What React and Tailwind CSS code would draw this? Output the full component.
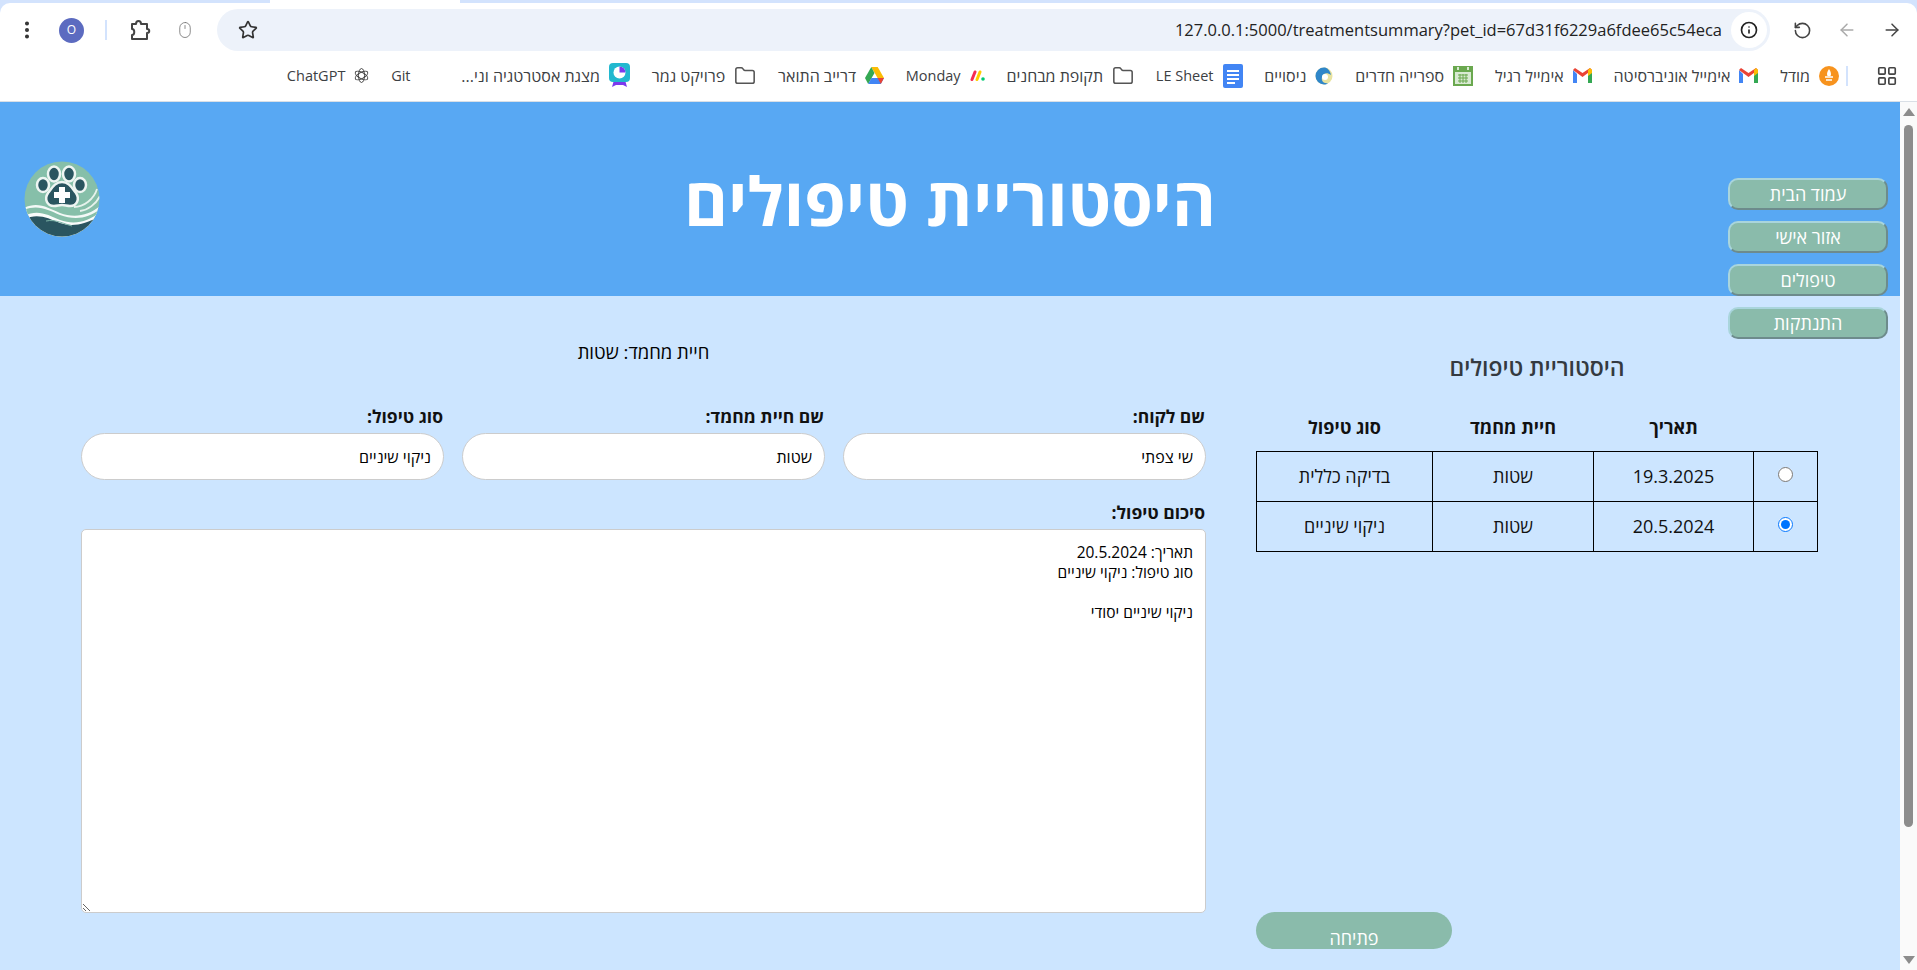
import React from 'react';
import { MoreVertical, Star, Info, RotateCcw, ArrowLeft, ArrowRight, Folder, LayoutGrid, Mouse } from 'lucide-react';

const font = 'font-["Open_Sans","Liberation_Sans",sans-serif]';

// favicons for the bookmarks bar
const MoodleIcon = () => (
  <svg width="20" height="20" viewBox="0 0 20 20">
    <circle cx="10" cy="10" r="10" fill="#f7931e" />
    <path d="M10 3c2 3 2.500 5 1.500 7h-3C7.500 8 8 6 10 3z" fill="#fff" />
    <path d="M6 11h8M7 14h6" stroke="#fff" strokeWidth="1.500" />
  </svg>
);
const GmailIcon = () => (
  <svg width="19" height="15" viewBox="0 0 19 15">
    <path d="M0 2v13h4V6z" fill="#4285f4" />
    <path d="M15 6v9h4V2z" fill="#34a853" />
    <path d="M0 2l9.500 7L19 2l-2-2-7.500 5L2 0z" fill="#ea4335" />
    <path d="M15 2l2-2 2 2v3l-4 3z" fill="#fbbc04" />
  </svg>
);
const CalendarIcon = () => (
  <svg width="20" height="20" viewBox="0 0 20 20">
    <rect width="20" height="20" fill="#6aa84f" />
    <rect x="2" y="6" width="16" height="12" fill="#d9ead3" />
    <path d="M5 9h10M5 12h10M5 15h10M7 8v9M10 8v9M13 8v9" stroke="#6aa84f" />
    <path d="M5 1v3M15 1v3" stroke="#fff" strokeWidth="1.500" />
  </svg>
);
const EdgeIcon = () => (
  <svg width="18" height="20" viewBox="0 0 18 20">
    <circle cx="9" cy="10" r="8.500" fill="#e8e3a0" />
    <path d="M9 1.500a8.500 8.500 0 0 0 0 17c2 0 3-.5 4-1.500-4 1-7-2-6-6s5-5 9-2C15 4 12 1.500 9 1.500z" fill="#2f86c9" />
    <circle cx="10" cy="11" r="3" fill="#fff" />
  </svg>
);
const DocIcon = () => (
  <svg width="20" height="24" viewBox="0 0 20 24">
    <rect width="20" height="24" rx="2" fill="#4285f4" />
    <path d="M4 7h12M4 11h12M4 15h12M4 19h8" stroke="#fff" strokeWidth="2" />
  </svg>
);
const MondayIcon = () => (
  <svg width="15" height="11" viewBox="0 0 15 11">
    <path d="M2 9.500L5 2" stroke="#f62b54" strokeWidth="3" strokeLinecap="round" />
    <path d="M7 9.500L10 2" stroke="#ffcc00" strokeWidth="3" strokeLinecap="round" />
    <circle cx="13" cy="9" r="1.800" fill="#00ca72" />
  </svg>
);
const DriveIcon = () => (
  <svg width="19" height="19" viewBox="0 0 19 17">
    <path d="M6.300 0h6.400l6.300 11h-6.400z" fill="#fbbc04" />
    <path d="M6.300 0L0 11l3.200 6 6.300-11z" fill="#34a853" />
    <path d="M3.200 17h12.600l3.200-6H6.400z" fill="#4285f4" />
    <path d="M15.800 17L19 11h-6.400z" fill="#ea4335" />
  </svg>
);
const SlidesIcon = () => (
  <svg width="21" height="25" viewBox="0 0 21 25">
    <path d="M5 17l-2 7 4-2h7l4 2-2-7z" fill="#7c3aed" />
    <rect width="21" height="19" rx="4" fill="#22b8cf" />
    <circle cx="10.500" cy="9.500" r="6" fill="#fff" />
    <path d="M10.500 9.500V3.500a6 6 0 0 1 6 6z" fill="#7c3aed" />
  </svg>
);
const GptIcon = () => (
  <svg width="15" height="15" viewBox="0 0 15 15" fill="none" stroke="#444" strokeWidth="1">
    <ellipse cx="7.500" cy="7.500" rx="3" ry="7" />
    <ellipse cx="7.500" cy="7.500" rx="3" ry="7" transform="rotate(60 7.500 7.500)" />
    <ellipse cx="7.500" cy="7.500" rx="3" ry="7" transform="rotate(120 7.500 7.500)" />
  </svg>
);
const FolderIcon = () => <Folder size={22} strokeWidth={1.7} color="#555" />;

const bookmarks = [
  { label: 'מודל', icon: <MoodleIcon /> },
  { label: 'אימייל אוניברסיטה', icon: <GmailIcon /> },
  { label: 'אימייל רגיל', icon: <GmailIcon /> },
  { label: 'ספרייה חדרים', icon: <CalendarIcon /> },
  { label: 'ניסויים', icon: <EdgeIcon /> },
  { label: 'LE Sheet', icon: <DocIcon />, latin: true },
  { label: 'תקופת מבחנים', icon: <FolderIcon /> },
  { label: 'Monday', icon: <MondayIcon />, latin: true },
  { label: 'דרייב התואר', icon: <DriveIcon /> },
  { label: 'פרויקט גמר', icon: <FolderIcon /> },
  { label: 'מצגת אסטרטגיה וני...', icon: <SlidesIcon /> },
  { label: 'Git', icon: <span className="w-[20px]" />, latin: true },
  { label: 'ChatGPT', icon: <GptIcon />, latin: true },
];

const navLinks = ['עמוד הבית', 'אזור אישי', 'טיפולים', 'התנתקות'];

const rows = [
  { date: '19.3.2025', pet: 'שטות', type: 'בדיקה כללית', checked: false },
  { date: '20.5.2024', pet: 'שטות', type: 'ניקוי שיניים', checked: true },
];

const fields = [
  { label: 'שם לקוח:', value: 'שי צפתי' },
  { label: 'שם חיית מחמד:', value: 'שטות' },
  { label: 'סוג טיפול:', value: 'ניקוי שיניים' },
];

const summary = 'תאריך: 20.5.2024\nסוג טיפול: ניקוי שיניים\n\nניקוי שיניים יסודי';

const BrowserChrome = () => (
  <div className="bg-[#d3e3fd] shrink-0">
    <div className="h-[3px] flex">
      <div className="w-[270px]" />
      <div className="w-[190px] bg-white" />
    </div>
    <div className="bg-white rounded-t-[10px] h-[54px] flex items-center">
      <MoreVertical size={22} strokeWidth={2.4} color="#333" className="ml-[16px] shrink-0" />
      <div className="ml-[21px] w-[25px] h-[25px] rounded-full bg-[#5c6bc0] text-white text-[12px] flex items-center justify-center shrink-0">O</div>
      <div className="ml-[21px] w-[2px] h-[20px] bg-[#d3e3fd] shrink-0" />
      <svg className="ml-[23px] shrink-0" width="21" height="22" viewBox="0 0 21 22" fill="none" stroke="#444" strokeWidth="2" strokeLinejoin="round">
        <path d="M2 5h4c0-4 5-4 5 0h6v5c3 0 3 4 0 4v6H2v-4c3 0 3-6 0-6z" />
      </svg>
      <Mouse size={18} strokeWidth={1} color="#666" className="ml-[25px] shrink-0" />
      <div className="ml-[23px] h-[42px] w-[1553px] rounded-full bg-[#edf2fa] flex items-center shrink-0">
        <Star size={20} strokeWidth={2} color="#333" className="ml-[21px] shrink-0" />
        <span className={`ml-auto text-[16.500px] text-[#222] whitespace-nowrap ${font}`}>127.0.0.1:5000/treatmentsummary?pet_id=67d31f6229a6fdee65c54eca</span>
        <div className="ml-[9px] mr-[3px] w-[36px] h-[36px] rounded-full bg-white flex items-center justify-center shrink-0">
          <Info size={18} strokeWidth={2.2} color="#222" />
        </div>
      </div>
      <RotateCcw size={19} strokeWidth={2} color="#444" className="ml-[23px] shrink-0" />
      <ArrowLeft size={20} strokeWidth={1.8} color="#aaa" className="ml-[25px] shrink-0" />
      <ArrowRight size={20} strokeWidth={1.8} color="#444" className="ml-[25px] shrink-0" />
    </div>
    <div dir="rtl" className={`bg-white h-[45px] pb-[7px] border-b border-[#d9dfe6] flex items-center text-[#3c4043] whitespace-nowrap ${font}`}>
      <LayoutGrid size={22} strokeWidth={1.8} color="#444" className="mr-[19px] shrink-0" />
      <div className="mr-[28px] w-[2px] h-[20px] bg-[#d3e3fd] shrink-0" />
      <div className="mr-[7px] flex items-center gap-[21.800px]">
        {bookmarks.map((b) => (
          <div key={b.label} className="flex items-center gap-[9px]">
            {b.icon}
            <span className={b.latin ? 'text-[14.500px]' : 'text-[16px]'}>{b.label}</span>
          </div>
        ))}
      </div>
    </div>
  </div>
);

const Logo = () => (
  <svg width="76" height="76" viewBox="0 0 76 76" className="shrink-0">
    <defs>
      <clipPath id="logoClip"><circle cx="38" cy="38" r="37.500" /></clipPath>
    </defs>
    <g clipPath="url(#logoClip)">
      <rect width="76" height="76" fill="#86bfa9" />
      <path d="M0 47c14-7 24 0 36 5 14 5 28 3 40-7v31H0z" fill="#fff" opacity="0.9" />
      <path d="M0 49c14-6 24 0 36 5 14 5 28 4 40-6v28H0z" fill="#86bfa9" />
      <path d="M0 55c14-7 24-1 36 4 14 5 28 2 40-8v25H0z" fill="#fff" opacity="0.95" />
      <path d="M0 58c14-6 24-1 36 4 12 4 24 2 40-7v21H0z" fill="#2a5560" />
      <path d="M22 60c10-2 18 3 26 5" stroke="#7fb5a8" strokeWidth="1" fill="none" />
      <path d="M50 46c10 0 20-8 23-18M56 50c8-1 16-7 20-15" stroke="#e6f2ec" strokeWidth="1.800" fill="none" />
    </g>
    <g fill="#2a5560" stroke="#eef5f2" strokeWidth="2.500">
      <ellipse cx="19" cy="24" rx="6" ry="7" />
      <ellipse cx="30" cy="13" rx="6" ry="7.500" />
      <ellipse cx="45" cy="13" rx="6" ry="7.500" />
      <ellipse cx="56" cy="24" rx="6" ry="7" />
      <path d="M38 21c7 0 10 6 14 11 4 6 1 13-6 13-3 0-5-1-8-1s-5 1-8 1c-7 0-10-7-6-13 4-5 7-11 14-11z" />
    </g>
    <path d="M35 26h6v5h5v6h-5v5h-6v-5h-5v-6h5z" fill="#fff" />
  </svg>
);

const Header = () => (
  <div className="h-[194px] bg-[#58a8f3] flex items-start">
    <div className="ml-[24px] mt-[59px]">
      <Logo />
    </div>
    <h1 dir="rtl" className="ml-[584px] mt-[54px] text-[67px] leading-[88px] font-bold text-white whitespace-nowrap">היסטוריית טיפולים</h1>
    <div dir="rtl" className="ml-auto mr-[12px] mt-[76px] flex flex-col gap-[11px]">
      {navLinks.map((link) => (
        <button key={link} className="w-[160px] h-[32px] rounded-[10px] bg-[#8abbab] border-2 border-t-[#a9d5dc] border-l-[#a9d5dc] border-r-[#6d8b8c] border-b-[#6d8b8c] text-white text-[18px] leading-[24px]">
          {link}
        </button>
      ))}
    </div>
  </div>
);

const TreatmentForm = () => (
  <div dir="rtl" className="ml-[81px] w-[1125px] shrink-0">
    <p className="mt-[44px] text-[18.500px] leading-[24px] text-black text-center">חיית מחמד: שטות</p>
    <div className="mt-[40px] grid grid-cols-3 gap-[18px]">
      {fields.map((f) => (
        <div key={f.label}>
          <label className="block pr-[1px] text-[17.500px] leading-[24px] font-bold text-[#111] mb-[5px]">{f.label}</label>
          <input
            type="text"
            readOnly
            value={f.value}
            className="w-full h-[47px] rounded-[24px] bg-white border border-[#cccccc] px-[12px] text-[16px] text-black"
          />
        </div>
      ))}
    </div>
    <label className="block mt-[20px] mb-[5px] pr-[1px] text-[17.500px] leading-[24px] font-bold text-[#111]">סיכום טיפול:</label>
    <textarea
      readOnly
      value={summary}
      className="block w-full h-[384px] rounded-[5px] bg-white border border-[#cccccc] px-[12px] py-[12px] text-[15.500px] leading-[20px] text-black"
    />
  </div>
);

const HistoryPanel = () => (
  <div dir="rtl" className="ml-[50px] w-[562px] shrink-0 flex flex-col">
    <h2 className="mt-[55px] text-[23px] leading-[32px] font-semibold text-[#343a40] text-center">היסטוריית טיפולים</h2>
    <table className="mt-[22px] w-full border-collapse table-fixed text-[18px] text-[#111]">
      <thead>
        <tr className="h-[46px]">
          <th className="w-[64px]" />
          <th className="w-[160px] font-bold">תאריך</th>
          <th className="w-[161px] font-bold">חיית מחמד</th>
          <th className="font-bold">סוג טיפול</th>
        </tr>
      </thead>
      <tbody>
        {rows.map((r) => (
          <tr key={r.date} className="h-[50px]">
            <td className="border border-black text-center">
              <input type="radio" name="treatment" readOnly checked={r.checked} className="w-[15px] h-[15px] align-middle mb-[6px]" />
            </td>
            <td className="border border-black text-center">{r.date}</td>
            <td className="border border-black text-center">{r.pet}</td>
            <td className="border border-black text-center">{r.type}</td>
          </tr>
        ))}
      </tbody>
    </table>
    <div className="mt-[360px] flex justify-end">
      <button className="w-[196px] h-[37px] pt-[14px] rounded-[19px] bg-[#8abbab] text-white text-[18px] leading-[24px]">פתיחה</button>
    </div>
  </div>
);

const Scrollbar = () => (
  <div className="w-[17px] shrink-0 bg-[#fafafa] flex flex-col items-center">
    <div className="mt-[6px] w-0 h-0 border-l-[6px] border-r-[6px] border-b-[8px] border-l-transparent border-r-transparent border-b-[#8c8c8c]" />
    <div className="mt-[9px] w-[9px] h-[702px] rounded-full bg-[#8c8c8c]" />
    <div className="mt-auto mb-[6px] w-0 h-0 border-l-[6px] border-r-[6px] border-t-[8px] border-l-transparent border-r-transparent border-t-[#8c8c8c]" />
  </div>
);

const App = () => {
  return (
    <div className={`h-[970px] w-[1917px] overflow-hidden flex flex-col ${font}`}>
      <BrowserChrome />
      <div className="flex flex-1 min-h-0">
        <div className="flex-1 min-w-0 bg-[#cce5ff]">
          <Header />
          <div className="flex">
            <TreatmentForm />
            <HistoryPanel />
          </div>
        </div>
        <Scrollbar />
      </div>
    </div>
  );
};

export default App;
